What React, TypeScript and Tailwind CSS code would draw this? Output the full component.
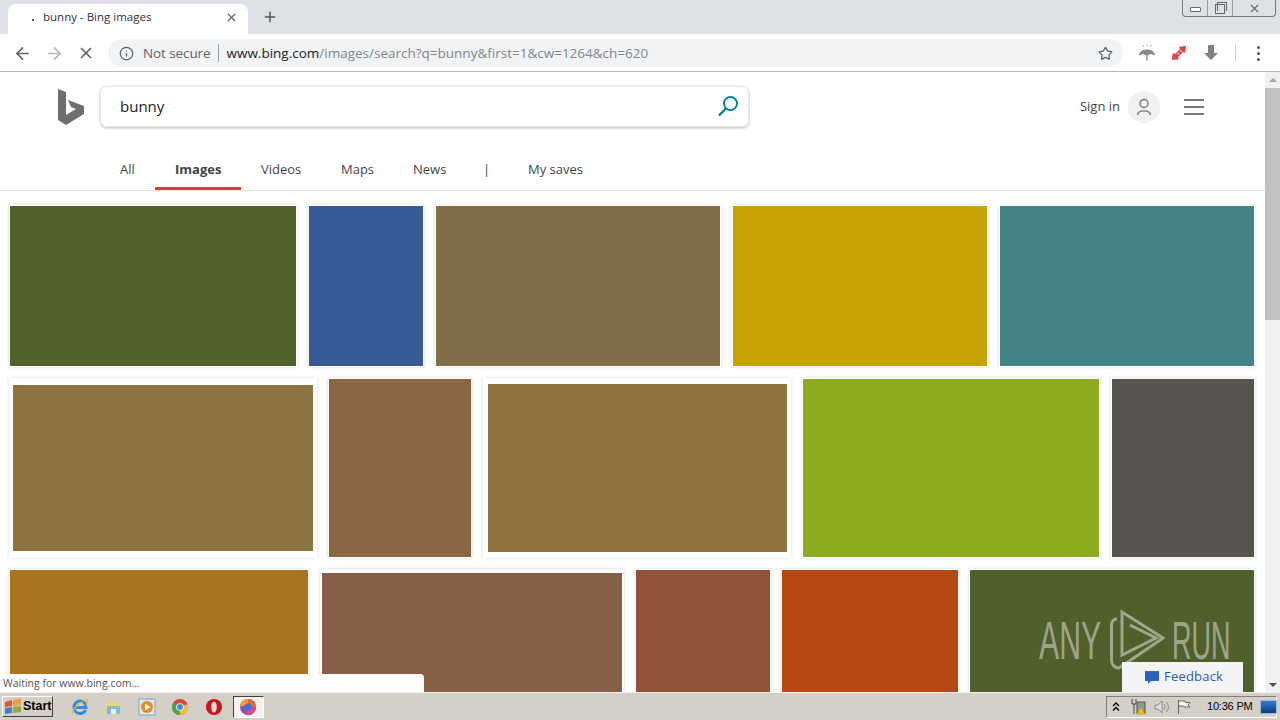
import React from 'react';
import { ArrowLeft, ArrowRight, X, Info, Star, Plus } from 'lucide-react';

const sans = "font-['Open_Sans','Liberation_Sans',sans-serif]";

type Tile = { w: string; color: string; card?: string };

const rows: { h: string; tiles: Tile[] }[] = [
  {
    h: 'h-[162px]',
    tiles: [
      { w: 'w-[288px]', color: 'bg-[#51612a]' },
      { w: 'w-[116px]', color: 'bg-[#355a96]' },
      { w: 'w-[286px]', color: 'bg-[#826d49]' },
      { w: 'w-[256px]', color: 'bg-[#c7a306]' },
      { w: 'w-[256px]', color: 'bg-[#448386]' },
    ],
  },
  {
    h: 'h-[180px]',
    tiles: [
      { w: 'w-[308px]', color: 'bg-[#8b7441]', card: 'px-[4px] py-[7px]' },
      { w: 'w-[144px]', color: 'bg-[#8b6642]' },
      { w: 'w-[308px]', color: 'bg-[#8e713c]', card: 'pl-[5px] pr-[4px] py-[6px]' },
      { w: 'w-[298px]', color: 'bg-[#8cab1f]' },
      { w: 'w-[144px]', color: 'bg-[#57534e]' },
    ],
  },
  {
    h: 'h-[180px]',
    tiles: [
      { w: 'w-[300px]', color: 'bg-[#ab731e]' },
      { w: 'w-[304px]', color: 'bg-[#875e46]', card: 'px-[2px] pt-[4px]' },
      { w: 'w-[136px]', color: 'bg-[#925237]' },
      { w: 'w-[178px]', color: 'bg-[#b54712]', card: 'p-[1px] ml-[-1px]' },
      { w: 'w-[286px]', color: 'bg-[#4f602c]', card: 'p-[1px] ml-[-1px]' },
    ],
  },
];

const navItems = [
  { label: 'All', cls: 'w-[55px] pl-[20px] border-transparent' },
  { label: 'Images', cls: 'w-[86px] pl-[20px] font-bold border-[#de3b1c]' },
  { label: 'Videos', cls: 'w-[80px] pl-[20px] border-transparent' },
  { label: 'Maps', cls: 'w-[72px] pl-[20px] border-transparent' },
  { label: 'News', cls: 'w-[72px] pl-[20px] border-transparent' },
  { label: '|', cls: 'w-[43px] pl-[18px] border-transparent' },
  { label: 'My saves', cls: 'w-[90px] pl-[20px] border-transparent' },
];

function Umbrella() {
  return (
    <svg width="18" height="18" viewBox="0 0 18 18">
      <path d="M1 11.5 C1 3.5 17 3.5 17 11.5 L13 10 L9 11.5 L5 10 Z" fill="#8a8a8a" />
      <path d="M9 11 V16.5" stroke="#8a8a8a" strokeWidth="1.3" />
      <path d="M5 1 L5.5 3 M9 0.5 V2.5 M13 1 L12.5 3" stroke="#b0b0b0" strokeWidth="1" />
    </svg>
  );
}

function RedArrows() {
  return (
    <svg width="18" height="18" viewBox="0 0 18 18">
      <path d="M1 17 L2 9 L4.5 10 L10 4.5 L9 2 L17 1 L16 9 L13.5 8 L8 13.5 L9 16 Z" fill="#e0434a" />
      <path d="M7 8.5 L9.5 11 M10 5.5 L12.5 8" stroke="#f6c6c8" strokeWidth="1.2" />
    </svg>
  );
}

function DownArrow() {
  return (
    <svg width="16" height="18" viewBox="0 0 16 18">
      <path d="M5 1 H11 V9 H15 L8 16 L1 9 H5 Z" fill="#808080" />
    </svg>
  );
}

function BingLogo() {
  return (
    <svg width="26" height="36" viewBox="0 0 26 36">
      <path d="M0 0 L8 3 V26 L18 20 L13 18 L10 11 L26 17 V25 L8 36 L0 31 Z" fill="#6f6f6f" />
    </svg>
  );
}

function SearchGlass() {
  return (
    <svg width="22" height="22" viewBox="0 0 22 22" fill="none">
      <circle cx="13.5" cy="8.5" r="6.5" stroke="#00809d" strokeWidth="2" />
      <path d="M9 13.5 L2 20.5" stroke="#00809d" strokeWidth="2.4" />
    </svg>
  );
}

function UserIcon() {
  return (
    <svg width="16" height="18" viewBox="0 0 16 18" fill="none" stroke="#767676" strokeWidth="1.4">
      <circle cx="8" cy="5.5" r="4" />
      <path d="M1.5 17 C2 11.5 14 11.5 14.5 17" />
    </svg>
  );
}

function AnyRunMark() {
  return (
    <svg width="55" height="60" viewBox="0 0 55 60" fill="none" stroke="rgba(255,255,255,0.45)" strokeWidth="3">
      <path d="M7 9 C3 9 1.5 12 1.5 15 V50 C1.5 55 5 58 9 58 L53 28 L12 2 V45 L46 28 L20 15" />
    </svg>
  );
}

function TaskIcon({ kind }: { kind: string }) {
  if (kind === 'ie')
    return (
      <svg width="18" height="18" viewBox="0 0 18 18" fill="none">
        <path d="M3.5 9.5 H15 C15 5 12 3 9 3 C5.5 3 3 6 3 9.5 C3 13 5.5 15.5 9 15.5 C11.5 15.5 13.5 14.5 14.5 12" stroke="#2f8de0" strokeWidth="3" />
        <path d="M1.5 16 C0 13 8 4 16 1.5 C17 3 16 6 15 7" stroke="#e5b93a" strokeWidth="1.2" />
      </svg>
    );
  if (kind === 'folder')
    return (
      <svg width="18" height="18" viewBox="0 0 18 18">
        <path d="M2 3 H8 L10 5 H15 V16 H2 Z" fill="#e9d37c" />
        <rect x="3" y="8" width="13" height="8" fill="#7fbcd4" />
        <rect x="7" y="11" width="5" height="5" fill="#e9eef0" />
      </svg>
    );
  if (kind === 'media')
    return (
      <svg width="18" height="18" viewBox="0 0 18 18">
        <rect x="1" y="1" width="16" height="16" fill="#dfe9f5" stroke="#7da2ce" />
        <circle cx="9" cy="9" r="6" fill="#ec8a1c" />
        <path d="M7 5.5 L12.5 9 L7 12.5 Z" fill="#fff" />
      </svg>
    );
  if (kind === 'chrome')
    return (
      <svg width="18" height="18" viewBox="0 0 18 18">
        <circle cx="9" cy="9" r="8" fill="#d8473a" />
        <path d="M9 9 L2 5 A8 8 0 0 0 9 17 Z" fill="#4da54f" />
        <path d="M9 9 L16.5 6 A8 8 0 0 1 9 17 Z" fill="#ecc23c" />
        <circle cx="9" cy="9" r="3.8" fill="#fff" />
        <circle cx="9" cy="9" r="3" fill="#4a88d8" />
      </svg>
    );
  if (kind === 'opera')
    return (
      <svg width="18" height="18" viewBox="0 0 18 18">
        <circle cx="9" cy="9" r="8" fill="#c4161c" />
        <ellipse cx="9" cy="9" rx="2.8" ry="5.6" fill="#f3d9d9" />
      </svg>
    );
  return (
    <svg width="18" height="18" viewBox="0 0 18 18">
      <circle cx="9" cy="9" r="8" fill="#8a4fc0" />
      <path d="M9 1 A8 8 0 0 1 17 9 L9 9 Z" fill="#e8663c" />
      <path d="M17 9 A8 8 0 0 1 7 17 L9 9 Z" fill="#d84a8a" />
      <path d="M1 9 A8 8 0 0 1 9 1 L9 6 Z" fill="#f0a030" />
      <circle cx="9" cy="9" r="3.4" fill="#3f6fd0" />
    </svg>
  );
}

function WinFlag() {
  return (
    <svg width="18" height="17" viewBox="0 0 18 17">
      <path d="M1 4 L8 2 V8 L1 9 Z" fill="#e4572e" />
      <path d="M9 2 L17 0 V7 L9 8 Z" fill="#e6a23c" />
      <path d="M1 10 L8 9 V15 L1 16 Z" fill="#3f7fd0" />
      <path d="M9 9 L17 8 V14 L9 15 Z" fill="#9aa83a" />
    </svg>
  );
}

export default function App() {
  return (
    <div className={`relative flex flex-col w-[1280px] h-[720px] overflow-hidden bg-white ${sans}`}>
      {/* tab strip */}
      <div className="flex items-end justify-between h-[34px] bg-[#dee1e6] pl-[8px] shrink-0">
        <div className="flex items-end">
          <div className="flex items-center w-[240px] h-[30px] bg-white rounded-t-lg pl-[24px] pr-[10px] pb-[4px]">
            <div className="w-[2px] h-[2px] bg-[#2b62c0] mr-[9px] mt-[5px] shrink-0" />
            <span className="truncate flex-1 text-[11.5px] text-[#333]">bunny - Bing images</span>
            <X size={13} strokeWidth={2.2} className="text-[#5f6368]" />
          </div>
          <div className="flex items-center h-[34px] pl-[14px]">
            <Plus size={16} strokeWidth={2.2} className="text-[#555]" />
          </div>
        </div>
        <div className="self-start flex h-[17px] mr-[4px] border border-t-0 border-[#777] rounded-b-[4px] bg-[#dee1e6] text-[#555]">
          <div className="flex items-center justify-center w-[25px] border-r border-[#999]">
            <div className="w-[11px] h-[5px] border border-[#666] rounded-[1px] bg-white mt-[3px]" />
          </div>
          <div className="flex items-center justify-center w-[25px] border-r border-[#999]">
            <div className="relative w-[10px] h-[10px] border border-[#666] mt-[2px]">
              <div className="absolute -top-[3px] left-[1px] w-[10px] h-[9px] border border-b-0 border-[#666]" />
            </div>
          </div>
          <div className="flex items-center justify-center w-[42px]">
            <X size={13} strokeWidth={2} className="text-[#666]" />
          </div>
        </div>
      </div>

      {/* toolbar */}
      <div className="flex items-center h-[38px] shrink-0 bg-white border-b border-[#b8b8b8] pt-[1px]">
        <div className="flex items-center justify-center w-[44px]">
          <ArrowLeft size={19} strokeWidth={2.2} className="text-[#5f6368]" />
        </div>
        <div className="flex items-center justify-center w-[20px]">
          <ArrowRight size={19} strokeWidth={2.2} className="text-[#b4b7bb]" />
        </div>
        <div className="flex items-center justify-center w-[44px]">
          <X size={18} strokeWidth={2.2} className="text-[#5f6368]" />
        </div>
        <div className="flex items-center w-[1015px] h-[28px] rounded-full bg-[#f1f3f4] pl-[11px] pr-[10px]">
          <Info size={15} strokeWidth={2} className="text-[#5f6368]" />
          <span className="ml-[9px] text-[13.5px] text-[#5f6368] tracking-[-0.1px]">Not secure</span>
          <div className="w-px h-[18px] bg-[#9aa0a6] ml-[8px] mr-[7px]" />
          <span className="flex-1 text-[13.5px] text-[#80868b]">
            <span className="text-[#222]">www.bing.com</span>/images/search?q=bunny&amp;first=1&amp;cw=1264&amp;ch=620
          </span>
          <Star size={15} strokeWidth={2} className="text-[#5f6368]" />
        </div>
        <div className="flex items-center justify-center w-[48px]"><Umbrella /></div>
        <div className="flex items-center justify-center w-[16px]"><RedArrows /></div>
        <div className="flex items-center justify-center w-[48px]"><DownArrow /></div>
        <div className="w-px h-[16px] bg-[#ccc]" />
        <div className="flex-1 flex flex-col items-center gap-[3px]">
          <div className="w-[3px] h-[3px] bg-[#555] rounded-full" />
          <div className="w-[3px] h-[3px] bg-[#555] rounded-full" />
          <div className="w-[3px] h-[3px] bg-[#555] rounded-full" />
        </div>
      </div>

      {/* page */}
      <div className="flex flex-1 min-h-0">
        <div className="w-[1265px] overflow-hidden">
          <div className="flex flex-col h-[119px] border-b border-[#e5e5e5]">
            <div className="flex items-center h-[70px] pl-[58px] pr-[61px]">
              <BingLogo />
              <div className="flex items-center justify-between w-[649px] h-[41px] ml-[16px] pl-[19px] pr-[9px] rounded-[7px] border border-[#e6e6e6] shadow-[0_1px_3px_rgba(0,0,0,0.28)] mt-[-2px]">
                <span className="text-[15px] text-[#222] mt-[1px]">bunny</span>
                <SearchGlass />
              </div>
              <div className="flex-1" />
              <span className="text-[13px] text-[#444]">Sign in</span>
              <div className="flex items-center justify-center w-[32px] h-[32px] rounded-full bg-[#f1f1f1] ml-[8px]">
                <UserIcon />
              </div>
              <div className="flex flex-col gap-[5px] w-[20px] ml-[24px] mt-[-1px]">
                <div className="h-[2px] bg-[#767676]" />
                <div className="h-[2px] bg-[#767676]" />
                <div className="h-[2px] bg-[#767676]" />
              </div>
            </div>
            <div className="flex flex-1 pl-[100px]">
              {navItems.map((item) => (
                <div key={item.label} className={`flex items-center pt-[10px] h-[48px] border-b-[3px] text-[13px] text-[#444] ${item.cls}`}>
                  {item.label}
                </div>
              ))}
            </div>
          </div>

          <div className="flex flex-col gap-[11px] pt-[14px] pl-[9px]">
            {rows.map((row, i) => (
              <div key={i} className={`flex gap-[11px] ${row.h}`}>
                {row.tiles.map((t, j) => (
                  <div key={j} className={`${t.w} h-full bg-white shadow-[0_0_3px_rgba(0,0,0,0.16)] ${t.card ?? 'p-[1px]'}`}>
                    <div className={`w-full h-full ${t.color}`} />
                  </div>
                ))}
              </div>
            ))}
          </div>
        </div>

        {/* scrollbar */}
        <div className="flex flex-col items-center justify-between w-[15px] bg-[#f1f1f1] pb-[5px]">
          <div className="flex flex-col items-center w-full pt-[6px]">
            <div className="w-0 h-0 border-x-[4px] border-x-transparent border-b-[4px] border-b-[#a3a3a3]" />
            <div className="w-full h-[232px] mt-[6px] bg-[#c1c1c1]" />
          </div>
          <div className="w-0 h-0 border-x-[4px] border-x-transparent border-t-[4px] border-t-[#505050]" />
        </div>
      </div>

      {/* taskbar */}
      <div className="flex items-center h-[28px] shrink-0 bg-[#d4d0c8] border-t border-[#f4f2ee] pl-[2px] pr-[3px]">
        <div className="flex items-center w-[51px] h-[21px] bg-[#d4d0c8] border border-t-white border-l-white border-r-[#404040] border-b-[#404040] pl-[1px] font-['Liberation_Sans',sans-serif] font-bold text-[12.5px] text-black">
          <WinFlag />
          <span className="ml-[1px]">Start</span>
        </div>
        <div className="flex items-center ml-[10px]">
          {['ie', 'folder', 'media', 'chrome', 'opera'].map((k) => (
            <div key={k} className="flex items-center justify-center w-[33.5px]">
              <TaskIcon kind={k} />
            </div>
          ))}
          <div className="flex items-center justify-center w-[31px] h-[22px] ml-[2px] bg-[#f4f3ef] border border-t-[#404040] border-l-[#404040] border-r-white border-b-white">
            <TaskIcon kind="fox" />
          </div>
        </div>
        <div className="flex-1" />
        <div className="flex items-center w-[171px] h-[22px] border border-t-[#808080] border-l-[#808080] border-r-white border-b-white pl-[5px] font-['Liberation_Sans',sans-serif] text-[11px] text-black">
          <svg width="8" height="10" viewBox="0 0 8 10" fill="none" stroke="#000" strokeWidth="1.4" className="shrink-0">
            <path d="M1 4 L4 1 L7 4 M1 8.5 L4 5.5 L7 8.5" />
          </svg>
          <svg width="18" height="18" viewBox="0 0 18 18" className="ml-[9px] shrink-0">
            <path d="M3 1 V6 H7 V1 M5 6 V16" stroke="#444" fill="none" />
            <rect x="8" y="4" width="8" height="11" fill="#8a9a9a" stroke="#555" />
            <path d="M12 9 L16 16 H8 Z" fill="#f0c420" stroke="#a8860c" strokeWidth="0.5" />
          </svg>
          <svg width="18" height="16" viewBox="0 0 18 16" className="ml-[6px] shrink-0" fill="none" stroke="#8a8a8a">
            <path d="M2 6 H5 L9 2 V14 L5 10 H2 Z" fill="#ddd" />
            <path d="M11 5 C12.5 7 12.5 9 11 11 M13.5 3 C16 6 16 10 13.5 13" />
          </svg>
          <svg width="16" height="16" viewBox="0 0 16 16" className="ml-[5px] shrink-0" fill="none" stroke="#666">
            <path d="M2.5 1 V15 M2.5 2 H9 L9.5 3.5 H14 L12 6 L14 8 H8 L7.5 7 H2.5" fill="#f2f2f2" />
          </svg>
          <span className="ml-[15px] whitespace-nowrap tracking-[-0.2px]">10:36 PM</span>
          <div className="ml-[8px] w-[17px] h-[14px] shrink-0 bg-gradient-to-b from-[#2d7fd0] to-[#0b3f80] border border-[#a8b8cc]" />
        </div>
      </div>

      {/* status bubble */}
      <div className="absolute left-0 bottom-[28px] w-[424px] h-[18px] bg-white rounded-tr-[4px] pl-[3px] text-[10.5px] leading-[18px] text-[#555]">
        Waiting for www.bing.com...
      </div>

      {/* watermark */}
      <div className="absolute left-[1039px] top-[610px] flex items-center h-[60px] pointer-events-none text-[rgba(255,255,255,0.45)] font-['Liberation_Sans',sans-serif]">
        <span className="w-[71px] text-[53px] leading-none origin-left scale-x-[0.57] inline-block">ANY</span>
        <AnyRunMark />
        <span className="ml-[7px] w-[60px] text-[53px] leading-none origin-left scale-x-[0.51] inline-block">RUN</span>
      </div>

      {/* feedback */}
      <div className="absolute left-[1122px] bottom-[28px] flex items-center gap-[5px] w-[121px] h-[30px] pl-[23px] bg-[#f4f4f6] text-[13px] tracking-[0.2px] text-[#2f5aa8]">
        <svg width="14" height="15" viewBox="0 0 14 15">
          <path d="M0 1 H14 V11 H6 L3 14 V11 H0 Z" fill="#2b62c0" />
        </svg>
        Feedback
      </div>
    </div>
  );
}
